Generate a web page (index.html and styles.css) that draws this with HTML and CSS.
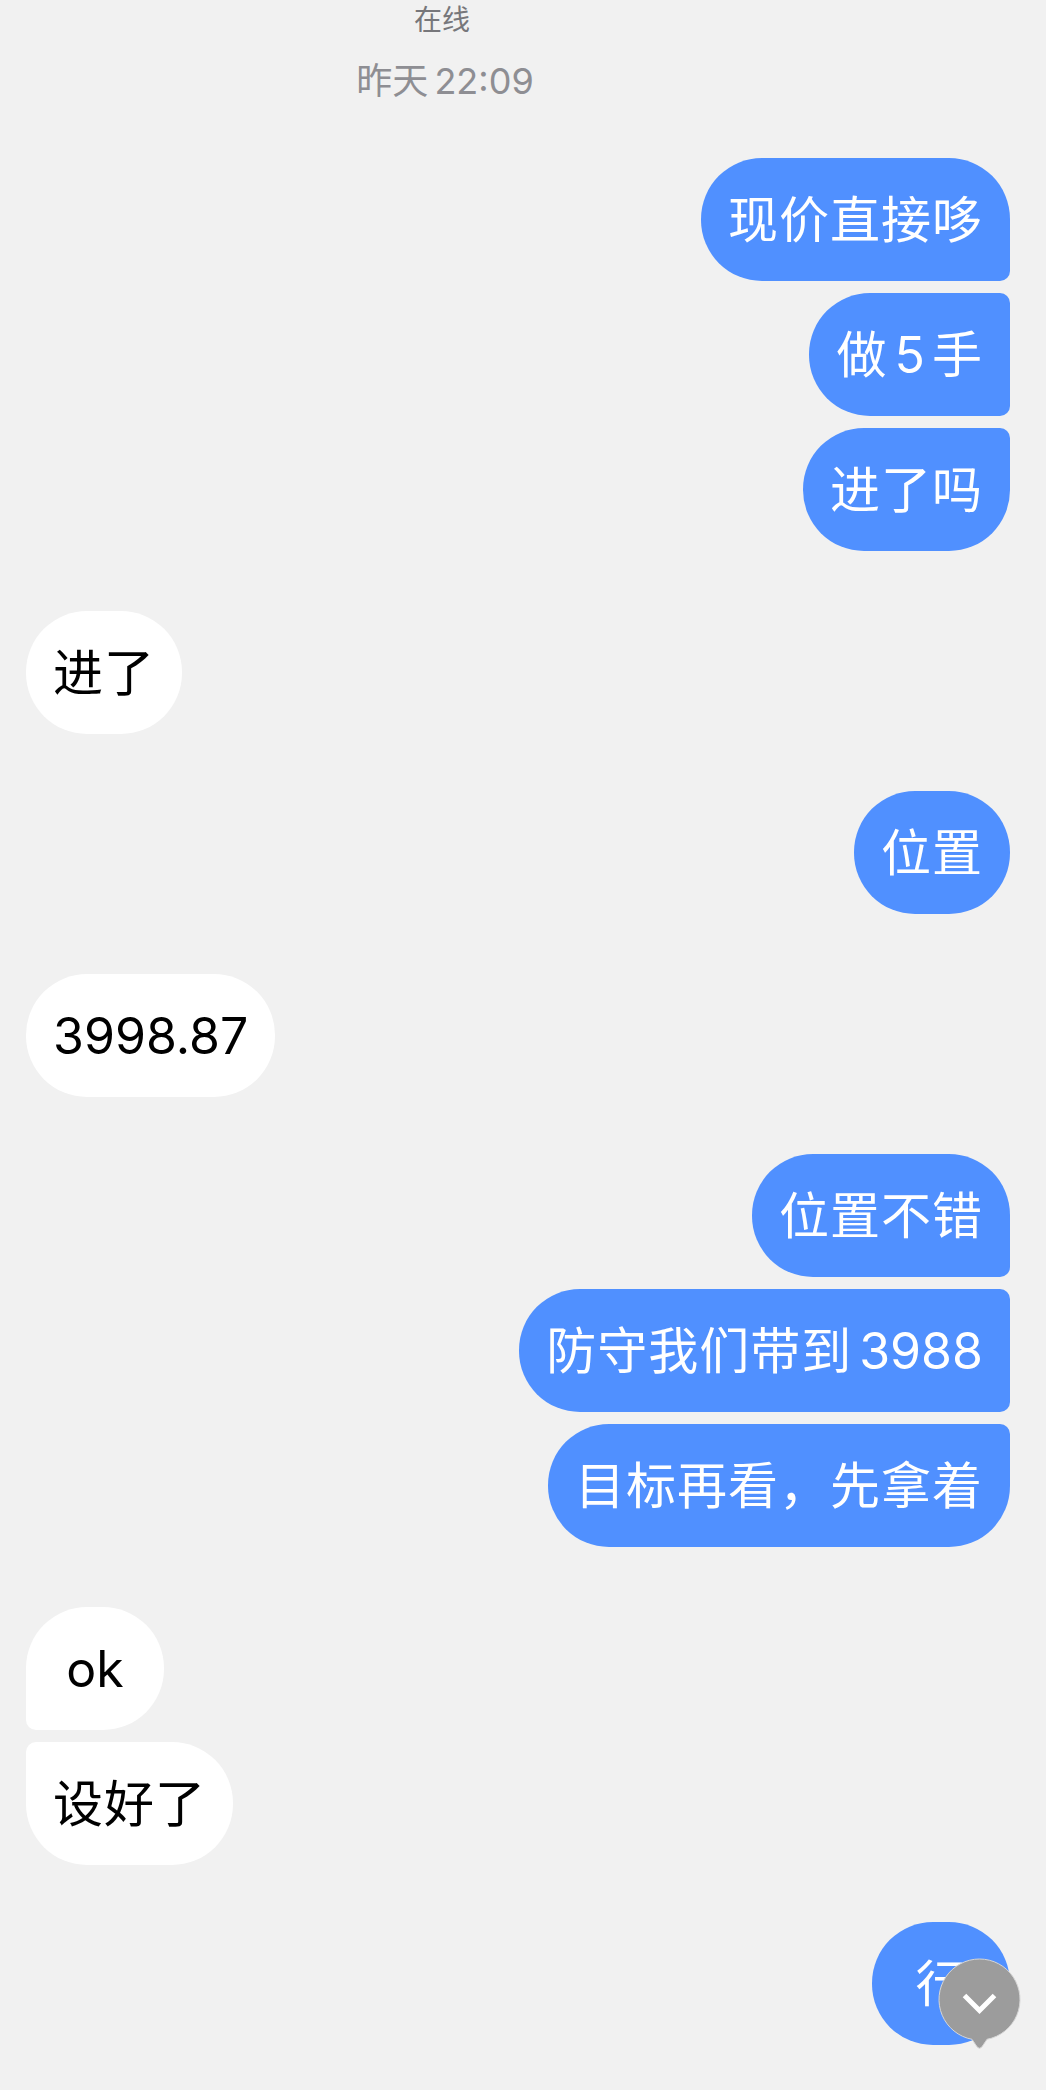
FILE: index.html
```html
<!DOCTYPE html>
<html lang="zh-CN">
<head>
  <meta charset="UTF-8">
  <meta name="viewport" content="width=device-width, initial-scale=1.0">
  <title>聊天</title>
  <link rel="stylesheet" href="styles.css">
</head>
<body>
  <div class="chat">
    <div class="status">在线</div>
    <div class="time">昨天 22:09</div>

    <div class="group out first">
      <div class="bubble top">现价直接哆</div>
      <div class="bubble middle">做 <span class="num">5</span> 手</div>
      <div class="bubble bottom">进了吗</div>
    </div>
    <div class="group in">
      <div class="bubble">进了</div>
    </div>
    <div class="group out">
      <div class="bubble">位置</div>
    </div>
    <div class="group in">
      <div class="bubble"><span class="num">3998.87</span></div>
    </div>
    <div class="group out">
      <div class="bubble top">位置不错</div>
      <div class="bubble middle">防守我们带到 <span class="num">3988</span></div>
      <div class="bubble bottom">目标再看，先拿着</div>
    </div>
    <div class="group in">
      <div class="bubble top"><span class="num">ok</span></div>
      <div class="bubble bottom">设好了</div>
    </div>
    <div class="group out">
      <div class="bubble">行</div>
    </div>

    <!-- 回到底部按钮 -->
    <div class="scroll-down">
      <svg width="84" height="94" viewBox="0 0 84 94">
        <path d="M34 81.300A40.500 40.500 0 1 1 49 81.300L44.500 88Q41.500 92.500 38.500 88Z" fill="#9c9c9c" stroke="#d6d6d6" stroke-width="1"/>
        <path d="M26.500 37.500L41.500 52.500L56.500 37.500" fill="none" stroke="#fff" stroke-width="5"/>
      </svg>
    </div>
  </div>
</body>
</html>
```

FILE: styles.css
```css
* {
  box-sizing: border-box;
}
html, body {
  margin: 0;
  background-color: #f1f1f1;
}
.chat {
  position: relative;
  height: 2090px;
  overflow: hidden;
  padding: 0 36px 0 26px;
  font-family: "Inter", "Noto Sans CJK SC", sans-serif;
}
.status {
  height: 40px;
  line-height: 41px;
  padding-right: 152px;
  font-size: 28px;
  color: #77777b;
  text-align: center;
}
.time {
  height: 42px;
  line-height: 42px;
  margin-top: 20px;
  padding-right: 146px;
  font-size: 36px;
  word-spacing: -4px;
  color: #8e8e93;
  text-align: center;
}
.group {
  display: flex;
  flex-direction: column;
  gap: 12px;
}
.group.out {
  align-items: flex-end;
  margin-top: 57px;
}
.group.in {
  align-items: flex-start;
  margin-top: 60px;
}
.group.first {
  margin-top: 56px;
}
.bubble {
  min-width: 138px;
  height: 123px;
  line-height: 123px;
  padding: 1px 27px 0;
  border-radius: 61px;
  font-size: 50px;
  letter-spacing: 1px;
  word-spacing: -8px;
  text-align: center;
  white-space: nowrap;
}
.num {
  letter-spacing: 0;
}
.out .bubble {
  background-color: #5090ff;
  color: #fff;
}
.in .bubble {
  background-color: #fff;
  color: #000;
}
.out .top {
  border-bottom-right-radius: 10px;
}
.out .middle {
  border-top-right-radius: 10px;
  border-bottom-right-radius: 10px;
}
.out .bottom {
  border-top-right-radius: 10px;
}
.in .top {
  border-bottom-left-radius: 10px;
}
.in .bottom {
  border-top-left-radius: 10px;
}
.scroll-down {
  position: absolute;
  left: 938px;
  top: 1958px;
  width: 84px;
  height: 94px;
}
```
